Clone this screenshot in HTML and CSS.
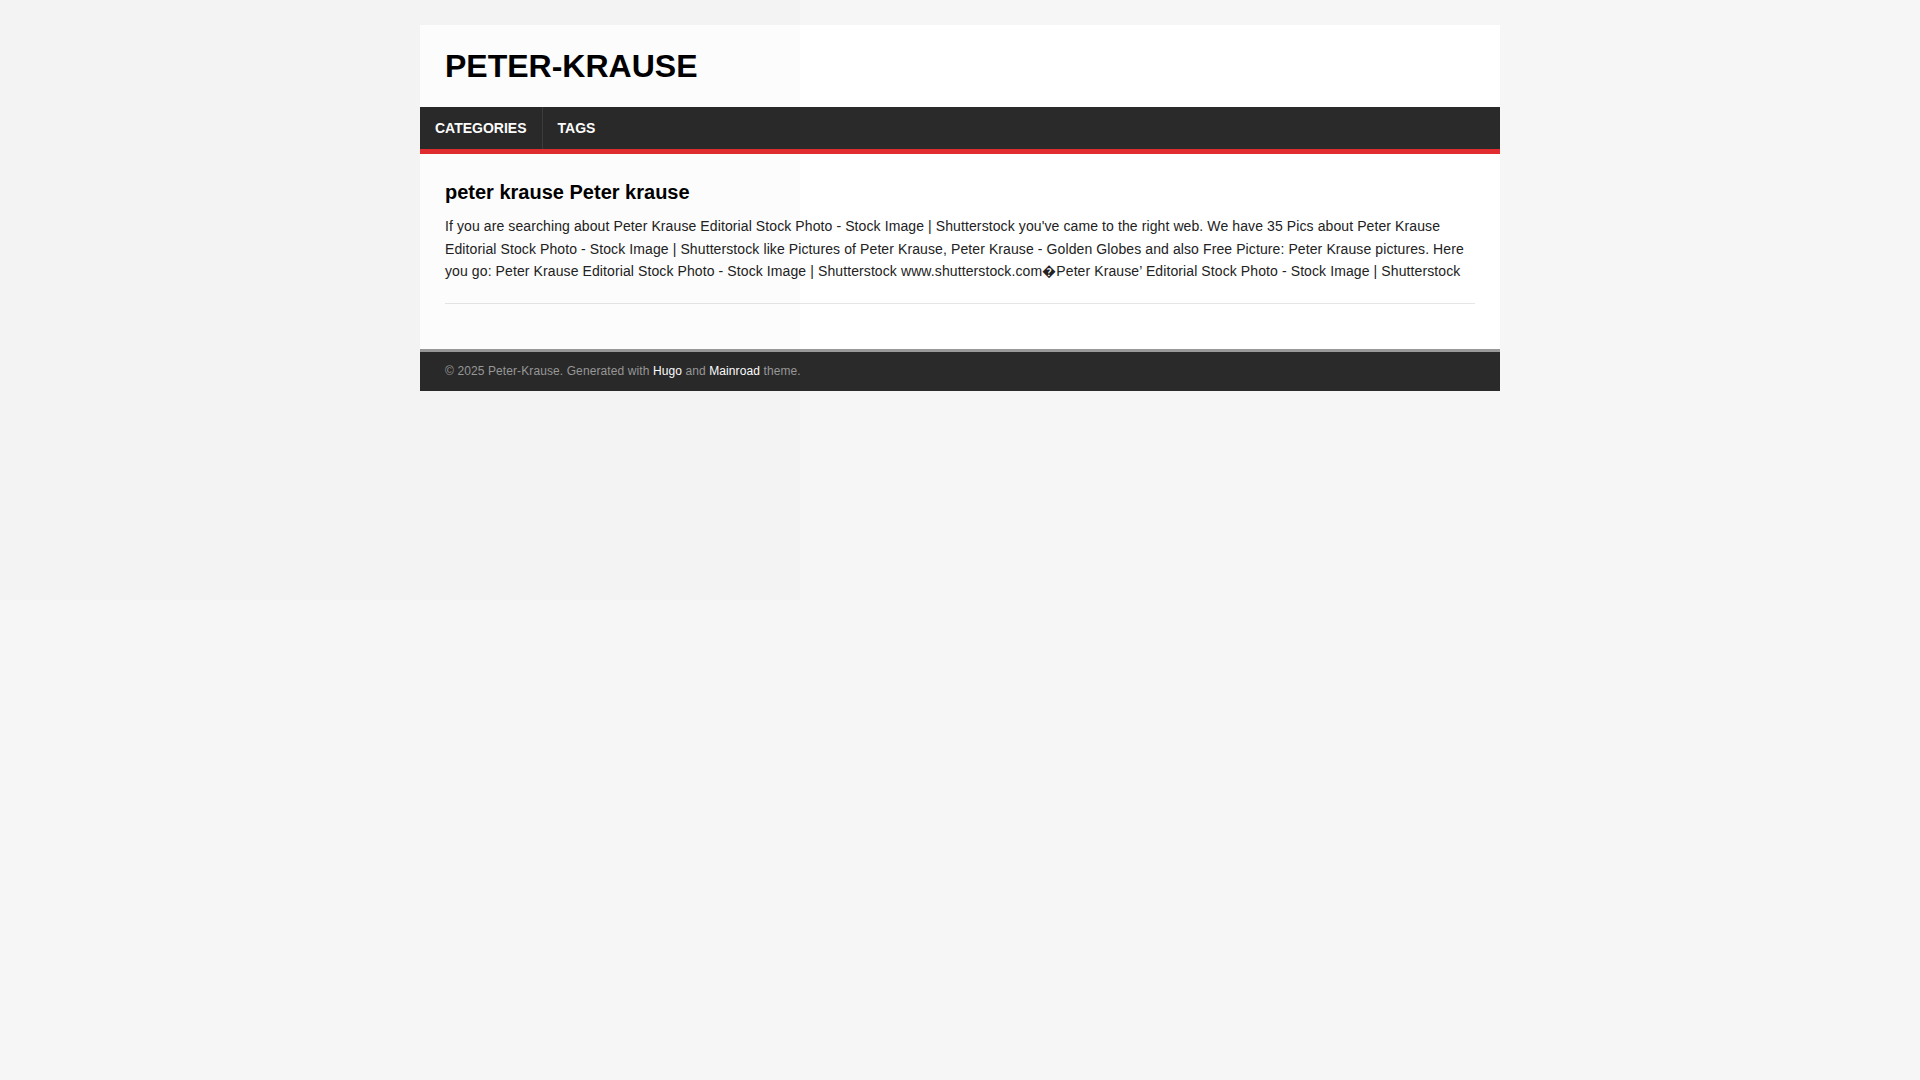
FILE: index.html
```html
<!DOCTYPE html>
<html lang="en">
<head>
<meta charset="utf-8">
<title>Peter-Krause</title>
<link rel="stylesheet" href="styles.css">
</head>
<body>
<div class="shade"></div>
<div class="container">
  <header class="header">
    <div class="logo">PETER-KRAUSE</div>
  </header>
  <nav class="menu">
    <a class="menu__item" href="#">CATEGORIES</a>
    <a class="menu__item" href="#">TAGS</a>
  </nav>
  <main class="main">
    <article class="post">
      <h1 class="post__title">peter krause Peter krause</h1>
      <p class="post__content">If you are searching about Peter Krause Editorial Stock Photo - Stock Image | Shutterstock you've came to the right web. We have 35 Pics about Peter Krause Editorial Stock Photo - Stock Image | Shutterstock like Pictures of Peter Krause, Peter Krause - Golden Globes and also Free Picture: Peter Krause pictures. Here you go: Peter Krause Editorial Stock Photo - Stock Image | Shutterstock www.shutterstock.com&#xFFFD;Peter Krause&#x0092; Editorial Stock Photo - Stock Image | Shutterstock</p>
    </article>
  </main>
  <footer class="footer">
    &copy; 2025 Peter-Krause. Generated with <a href="#">Hugo</a> and <a href="#">Mainroad</a> theme.
  </footer>
</div>
</body>
</html>
```

FILE: styles.css
```css
html, body {
  margin: 0;
  padding: 0;
}

body {
  background: #f6f6f6;
  font-family: "Liberation Sans", Arial, Helvetica, sans-serif;
  color: #222;
}

.shade {
  position: absolute;
  left: 0;
  top: 0;
  width: 800px;
  height: 600px;
  background: rgba(0, 0, 0, 0.011);
  pointer-events: none;
  z-index: 10;
}

.container {
  max-width: 1080px;
  margin: 25px auto;
  background: #fff;
}

.header {
  padding: 25px;
}

.logo {
  font-size: 32px;
  line-height: 32px;
  font-weight: 700;
  color: #000;
}

.menu {
  display: flex;
  background: #2a2a2a;
  border-bottom: 5px solid #e22d30;
}

.menu__item {
  display: block;
  padding: 0 15px;
  height: 42px;
  line-height: 42px;
  font-size: 14px;
  font-weight: 700;
  color: #fff;
  text-decoration: none;
  border-right: 1px solid #3d3d3d;
}

.menu__item:last-child {
  border-right: none;
}

.main {
  padding: 25px 25px 45px;
}

.post {
  border-bottom: 1px solid #e6e6e6;
}

.post__title {
  margin: 0 0 10px;
  font-size: 20px;
  line-height: 26px;
  font-weight: 700;
  color: #000;
}

.post__content {
  margin: 0 0 20px;
  font-size: 14px;
  line-height: 22.5px;
  letter-spacing: 0.1px;
  color: #222;
}

.footer {
  background: #2a2a2a;
  border-top: 3px solid #999;
  padding: 10px 25px;
  font-size: 12px;
  line-height: 19px;
  letter-spacing: 0.1px;
  color: #999;
}

.footer a {
  color: #fff;
  text-decoration: none;
}
```
